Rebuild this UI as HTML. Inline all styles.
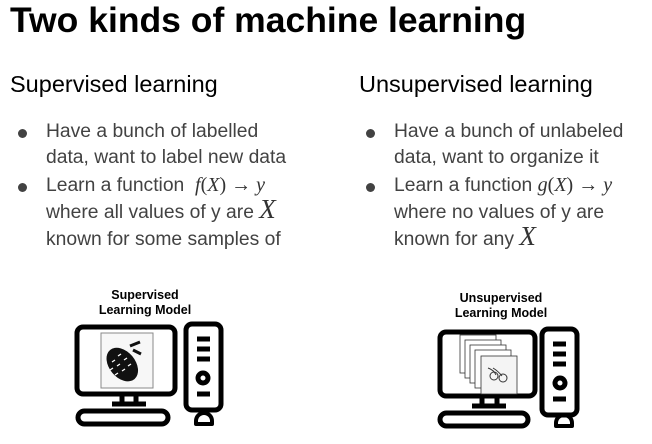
<!DOCTYPE html>
<html><head><meta charset="utf-8"><style>
body{margin:0;width:652px;height:444px;background:#fff;position:relative;overflow:hidden;font-family:"Liberation Sans",Arial,sans-serif}
.a{position:absolute;white-space:nowrap}
.t{font-size:35.5px;font-weight:bold;color:#000;left:10px;top:0px}
.h{font-size:23.5px;color:#000}
.l{font-size:19.3px;color:#424242;line-height:22px}
.m{font-family:"Liberation Serif",serif;font-style:italic;color:#333;line-height:0;font-size:20px}
.d{position:absolute;width:9px;height:9px;border-radius:50%;background:#424242}
.lab{font-size:12.5px;font-weight:bold;text-align:center;line-height:15px;color:#000}
</style></head><body>
<div class="a t">Two kinds of machine learning</div>
<div class="a h" style="left:10px;top:71px">Supervised learning</div>
<div class="a h" style="left:359px;top:71px">Unsupervised learning</div>

<div class="d" style="left:18px;top:129px"></div>
<div class="a l" style="left:46px;top:121px">Have a bunch of labelled</div>
<div class="a l" style="left:46px;top:147px">data, want to label new data</div>
<div class="d" style="left:18px;top:183px"></div>
<div class="a l" style="left:46px;top:175px">Learn a function &nbsp;<span class="m">f</span><span class="m" style="font-style:normal">(</span><span class="m">X</span><span class="m" style="font-style:normal">) → </span><span class="m">y</span></div>
<div class="a l" style="left:46px;top:202px">where all values of y are <span class="m" style="font-size:27px">X</span></div>
<div class="a l" style="left:46px;top:229px">known for some samples of</div>

<div class="d" style="left:366px;top:129px"></div>
<div class="a l" style="left:394px;top:121px">Have a bunch of unlabeled</div>
<div class="a l" style="left:394px;top:147px">data, want to organize it</div>
<div class="d" style="left:366px;top:183px"></div>
<div class="a l" style="left:394px;top:175px">Learn a function <span class="m">g</span><span class="m" style="font-style:normal">(</span><span class="m">X</span><span class="m" style="font-style:normal">) → </span><span class="m">y</span></div>
<div class="a l" style="left:394px;top:202px">where no values of y are</div>
<div class="a l" style="left:394px;top:229px">known for any <span class="m" style="font-size:27px">X</span></div>

<div class="a lab" style="left:90px;top:288px;width:110px">Supervised<br>Learning Model</div>
<div class="a lab" style="left:446px;top:291px;width:110px">Unsupervised<br>Learning Model</div>

<svg class="a" style="left:0;top:0" width="652" height="444">
<g fill="none" stroke="#000" stroke-width="5">
 <rect x="77" y="327" width="98" height="67" rx="6"/>
 <rect x="186" y="324" width="35" height="86" rx="6"/>
 <rect x="78" y="411" width="90" height="13" rx="6.5"/>
 <path d="M122 394v9M136 394v9M112 404h34"/>
 <path d="M197 339h13M197 349h13M197 359h13M197 394h13"/>
 <circle cx="203" cy="378" r="5"/>
 <path d="M196 424v-3a7 7 0 0 1 16 0v3z" stroke-width="4" stroke-linejoin="round"/>

 <rect x="440" y="332" width="95" height="64" rx="6"/>
 <rect x="542" y="329" width="35" height="86" rx="6"/>
 <rect x="440" y="413" width="88" height="13" rx="6.5"/>
 <path d="M482 396v9M497 396v9M472 406h34"/>
 <path d="M553 344h13M553 354h13M553 364h13M553 399h13"/>
 <circle cx="560" cy="383" r="5"/>
 <path d="M556 426v-3a7 7 0 0 1 16 0v3z" stroke-width="4" stroke-linejoin="round"/>
</g>
<rect x="101" y="333" width="52" height="55" fill="#f7f7f7" stroke="#888" stroke-width="1"/>
<g transform="rotate(-40 121 363)">
 <ellipse cx="121" cy="365" rx="13" ry="19" fill="#111"/>
</g>
<path d="M130 346l10-4M133 350l8 4" stroke="#111" stroke-width="3"/>
<g stroke="#fff" stroke-width="1.3"><path d="M112 362l3-2M118 356l3-2M110 370l3-2M117 366l3-2M124 360l3-2M115 375l3-2M122 371l3-2M128 366l3-2"/></g>
<g fill="#fff" stroke="#333" stroke-width="0.8">
 <rect x="460" y="335" width="36" height="38"/>
 <rect x="465" y="340" width="36" height="38"/>
 <rect x="470" y="345" width="36" height="38"/>
 <rect x="475" y="350" width="36" height="38"/>
 <rect x="481" y="356" width="36" height="38" fill="#f4f4f4"/>
</g>
<g fill="none" stroke="#333" stroke-width="1">
 <circle cx="494" cy="376" r="4"/><circle cx="503" cy="378" r="4"/>
 <path d="M488 368q6 2 8 7M493 368q5 3 9 8"/>
</g>
</svg>
</body></html>
